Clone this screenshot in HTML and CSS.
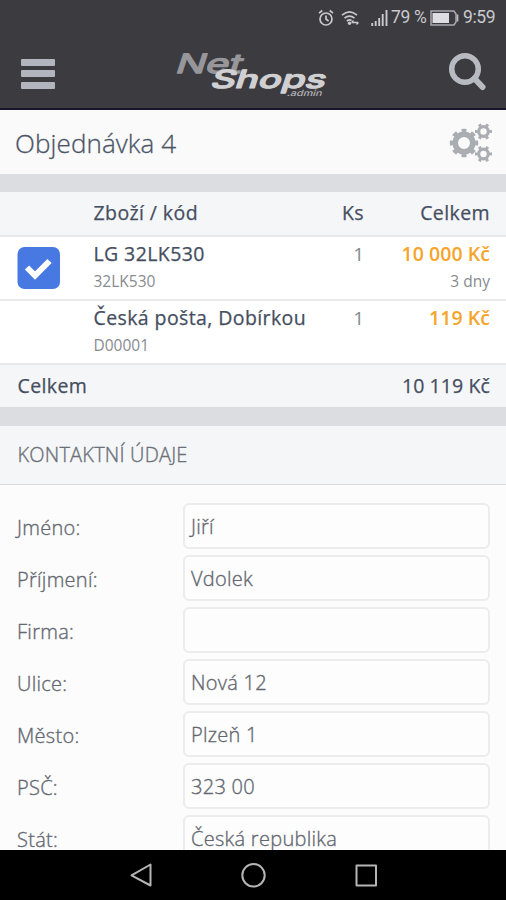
FILE: index.html
```html
<!DOCTYPE html>
<html lang="cs">
<head>
<meta charset="utf-8">
<title>Objednávka 4</title>
<link rel="stylesheet" href="styles.css">
</head>
<body>
<div class="screen">
  <header class="top">
    <div class="status">
      <svg class="alarm" width="16" height="18" viewBox="0 0 16 18"><g fill="none" stroke="#c9c9ce" stroke-width="1.7"><circle cx="8" cy="10" r="6"/><path d="M8 6.5V10l2.6 2M1 4.2 4.3 1.5M15 4.2 11.700 1.500"/></g></svg>
      <svg class="wifi" width="18" height="16" viewBox="0 0 18 16"><g fill="none" stroke="#c9c9ce" stroke-width="1.7"><path d="M1 5.200Q8.500-1.500 16 5.200M3.500 8.200Q8.500 4 13.500 8.200M5.800 11Q8.500 9 10.500 10.500"/></g><circle cx="8.500" cy="13.300" r="1.700" fill="#c9c9ce"/><path d="M11 12.500h6M12.500 10.500l-2 2M15.500 14.500l2-2" stroke="#c9c9ce" stroke-width="1.300"/></svg>
      <svg class="signal" width="18" height="16" viewBox="0 0 18 16"><path d="M1.200 16v-3M4.700 16v-5M8.200 16V8M11.700 16V4M15.500 16V0" stroke="#c9c9ce" stroke-width="1.900"/></svg>
      <span class="percent">79 %</span>
      <svg class="battery" width="29" height="16" viewBox="0 0 29 16"><path d="M1 1h23l2 3v8l-2 3H1z" fill="none" stroke="#a9a9ae" stroke-width="1.500"/><path d="M2.500 3H19v10H2.500z" fill="#dedee2"/><path d="M27.500 4.500v7" stroke="#bcbcc1" stroke-width="1.700"/></svg>
      <span class="clock">9:59</span>
    </div>
    <div class="bar">
      <div class="menu"><i></i><i></i><i></i></div>
      <svg class="logo" width="156" height="50" viewBox="0 0 156 50">
        <g transform="skewX(-18)" font-family="Inter, sans-serif" stroke-linejoin="round">
          <text x="7" y="24" font-size="26.500" font-weight="400" fill="#96969b" stroke="#96969b" stroke-width="1.300" textLength="66" lengthAdjust="spacingAndGlyphs">Net</text>
          <text x="47" y="39.500" font-size="25" font-weight="500" fill="#d0d0d3" stroke="#d0d0d3" stroke-width="1.100" textLength="115" lengthAdjust="spacingAndGlyphs">Shops</text>
          <text x="127" y="47.500" font-size="8.500" font-weight="500" fill="#b5b5b9" textLength="35" lengthAdjust="spacingAndGlyphs">.admin</text>
        </g>
      </svg>
      <svg class="search" width="38" height="39" viewBox="0 0 38 39"><g fill="none" stroke="#b8bac2"><circle cx="16" cy="17" r="13.300" stroke-width="5.500"/><path d="M25.500 26.500l8 8.500" stroke-width="6" stroke-linecap="round"/></g></svg>
    </div>
  </header>
  <div class="title">
    <h1>Objednávka 4</h1>
    <svg class="gears" width="44" height="40" viewBox="0 0 44 40">
      <g fill="none" stroke="#aaadb2">
        <circle cx="15" cy="20" r="8.800" stroke-width="5.600"/>
        <circle cx="15" cy="20" r="12" stroke-width="4.400" pathLength="80" stroke-dasharray="5 5" stroke-dashoffset="2.500"/>
        <circle cx="34.500" cy="8.500" r="4.800" stroke-width="3.200"/>
        <circle cx="34.500" cy="8.500" r="7" stroke-width="3" pathLength="60" stroke-dasharray="4 6" stroke-dashoffset="2"/>
        <circle cx="34.500" cy="31" r="4.800" stroke-width="3.200"/>
        <circle cx="34.500" cy="31" r="7" stroke-width="3" pathLength="60" stroke-dasharray="4 6" stroke-dashoffset="2"/>
      </g>
    </svg>
  </div>
  <div class="gap"></div>
  <section class="order">
    <div class="row head"><span></span><span>Zboží / kód</span><span class="qty">Ks</span><span class="sum">Celkem</span></div>
    <div class="row item">
      <span class="check"><svg width="43" height="42" viewBox="0 0 43 42"><rect x=".5" width="42.500" height="42" rx="7" fill="#4879e3"/><path d="M10 20.500l8 8L32.500 14" fill="none" stroke="#fff" stroke-width="6"/></svg></span>
      <div><p class="name">LG 32LK530</p><p class="code">32LK530</p></div>
      <span class="qty">1</span>
      <div class="sum"><p class="price">10 000 Kč</p><p class="term">3 dny</p></div>
    </div>
    <div class="row item">
      <span></span>
      <div><p class="name">Česká pošta, Dobírkou</p><p class="code">D00001</p></div>
      <span class="qty">1</span>
      <div class="sum"><p class="price">119 Kč</p></div>
    </div>
    <div class="total"><span>Celkem</span><span class="amount">10 119 Kč</span></div>
  </section>
  <div class="gap second"></div>
  <h2>KONTAKTNÍ ÚDAJE</h2>
  <form class="form">
    <label><span>Jméno:</span><span class="input">Jiří</span></label>
    <label><span>Příjmení:</span><span class="input">Vdolek</span></label>
    <label><span>Firma:</span><span class="input"></span></label>
    <label><span>Ulice:</span><span class="input">Nová 12</span></label>
    <label><span>Město:</span><span class="input">Plzeň 1</span></label>
    <label><span>PSČ:</span><span class="input">323 00</span></label>
    <label><span>Stát:</span><span class="input">Česká republika</span></label>
  </form>
  <nav class="nav">
    <svg width="506" height="50" viewBox="0 0 506 50"><g fill="none" stroke="#b5b5b5" stroke-width="2" stroke-linejoin="round"><path d="M150.500 14.500v21L131.500 25.300z"/><circle cx="253.500" cy="25.300" r="11.200"/><path d="M356.500 15.500h19.500v20h-19.500z"/></g></svg>
  </nav>
</div>
</body>
</html>
```
FILE: styles.css
```css
* { box-sizing: border-box; }
body { margin: 0; font-family: "Open Sans", "Noto Sans", sans-serif; background: #fcfcfc; }
p, h1, h2 { margin: 0; }
.screen { width: 506px; height: 900px; display: flex; flex-direction: column; overflow: hidden; }
.screen > * { flex: none; }

.top { height: 110px; background: #3c3b40; border-bottom: 2px solid #19142b; }
.status { height: 35px; display: flex; align-items: center; justify-content: flex-end; padding-right: 11px; font: 17.5px/35px Roboto, sans-serif; color: #c9c9ce; }
.alarm { margin-right: 1px; }
.wifi { margin-left: 6px; }
.signal { margin-left: 12px; }
.percent { margin-left: 2px; width: 36px; white-space: nowrap; letter-spacing: -.3px; }
.battery { margin-left: 3px; }
.clock { margin-left: 4px; width: 32px; letter-spacing: -.4px; }
.bar { height: 73px; display: flex; align-items: flex-start; padding: 0 19px 0 21px; }
.menu { width: 34px; margin-top: 24px; display: grid; gap: 4px; }
.menu i { height: 7px; margin-bottom: .3px; background: #b3b5be; border-radius: 1px; }
.logo { margin: 14px 0 0 120px; overflow: visible; }
.search { margin: 17px 0 0 auto; }

.title { height: 64px; background: #fafafa; display: flex; align-items: center; justify-content: space-between; padding: 0 13px 0 15px; }
h1 { font-size: 26px; line-height: 34px; font-weight: 300; color: #4b5566; -webkit-text-stroke: .3px #4b5566; margin-top: 1px; letter-spacing: .1px; }
.gears { margin-top: 2px; }
.gap { height: 18px; background: #dcdde0; }
.gap.second { height: 19px; }

.row { display: grid; grid-template-columns: 76.5px 1fr 50px 126px; padding: 0 16px 0 17px; }
.qty { text-align: right; }
.sum { text-align: right; }
.head, .name, .total { font-size: 19.5px; letter-spacing: .4px; font-weight: 400; color: #454e60; -webkit-text-stroke: .25px #454e60; white-space: nowrap; }
.head { height: 43px; background: #f5f6f8; line-height: 42px; }
.item { height: 64px; background: #fff; border-top: 2px solid #e9eaeb; }
.item .qty { font-size: 19px; line-height: 34px; color: #85888e; }
.check { padding-top: 10px; }
.name { line-height: 34px; }
.code, .term { line-height: 20px; color: #888b90; }
.code { font-size: 15.5px; }
.term { font-size: 15.5px; }
.price { font-size: 19.5px; line-height: 34px; font-weight: 600; color: #f6a42b; letter-spacing: .05px; }
.total { height: 44px; background: #f5f6f8; border-top: 2px solid #e9eaeb; display: flex; justify-content: space-between; padding: 0 16px 0 17.5px; line-height: 41px; }
.amount { letter-spacing: .1px; }

h2 { height: 59px; background: #f5f6f8; border-bottom: 1px solid #d9dadd; padding-left: 17.5px; font-size: 20px; line-height: 57px; font-weight: 300; color: #6b7078; -webkit-text-stroke: .35px #6b7078; letter-spacing: .2px; }
.form { height: 365px; overflow: hidden; padding: 18px 16px 0 17px; display: flex; flex-direction: column; gap: 6px; }
label { display: grid; grid-template-columns: 166px 1fr; flex: none; height: 46px; font-size: 20px; font-weight: 300; line-height: 50px; color: #636870; -webkit-text-stroke: .35px #636870; letter-spacing: .28px; }
.input { height: 46px; border: 2px solid #ececee; border-radius: 6px; padding-left: 6px; line-height: 43px; background: #fdfdfd; }
.nav { height: 50px; background: #000; }
```
